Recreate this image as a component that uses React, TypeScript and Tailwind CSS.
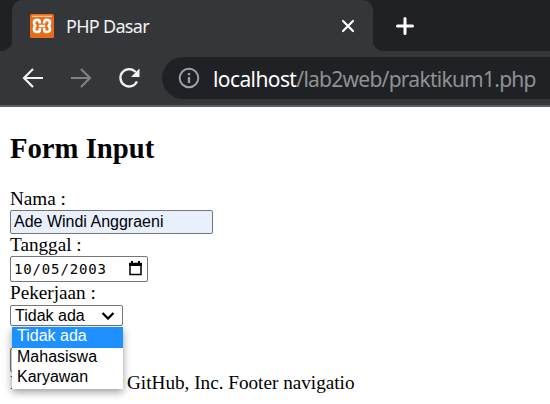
import React from "react";

function BrowserChrome() {
  return (
    <header className="h-[107px] border-b-2 border-[#5f6063] bg-[#35363a] font-['Noto_Sans','Open_Sans',sans-serif]">
      <div className="flex h-[51px] bg-[#35363a]">
        <div className="w-3 shrink-0 rounded-br-[10px] bg-[#202124]" />
        <div className="w-[361px] shrink-0 bg-[#202124]">
          <div className="flex h-full items-center rounded-t-[10px] bg-[#35363a] pl-[18px] pr-[17px]">
            <svg className="h-6 w-6 shrink-0" viewBox="0 0 24 24">
              <rect width="24" height="24" rx="1.5" fill="#e96b17" />
              <path d="M2 1.7h20v1.4H2z" fill="#f9c4a0" />
              <path d="M9.800 9.500V8.200C9.800 6.500 8.800 5.900 7.300 5.900 5 5.900 4 7.300 4 8.800c0 1.400.6 2.200 1.500 3.100C4.600 12.800 4 13.700 4 15c0 1.600 1 3 3.300 3 1.500 0 2.500-.7 2.500-2.300V14M14.200 9.500V8.200c0-1.700 1-2.300 2.500-2.300C19 5.900 20 7.300 20 8.800c0 1.400-.6 2.200-1.500 3.100.9.900 1.500 1.800 1.500 3.100 0 1.600-1 3-3.300 3-1.500 0-2.500-.7-2.500-2.300V14M8.800 12h6.400" fill="none" stroke="#fff" strokeWidth="2.700" strokeLinejoin="round" />
            </svg>
            <span className="ml-3 whitespace-nowrap text-[18px] leading-6 tracking-[-0.7px] text-[#f1f3f4]">PHP Dasar</span>
            <svg className="ml-auto h-4 w-4" viewBox="0 0 16 16" fill="none" stroke="#fff" strokeWidth="2.2" strokeLinecap="round"><path d="m3 3 10 10M13 3 3 13" /></svg>
          </div>
        </div>
        <div className="flex grow items-center rounded-bl-[10px] bg-[#202124] pl-[23px]">
          <svg className="h-[18px] w-[18px]" viewBox="0 0 18 18" fill="none" stroke="#fff" strokeWidth="3" strokeLinecap="round"><path d="M9 1.5v15M1.5 9h15" /></svg>
        </div>
      </div>
      <div className="flex h-[54px] items-center">
        <div className="flex w-[162px] shrink-0 items-center gap-6 pl-[21px]">
          <svg className="h-6 w-6" viewBox="0 0 24 24" fill="none" stroke="#f1f3f4" strokeWidth="2.2"><path d="M22 12H3M12 3l-9 9 9 9" /></svg>
          <svg className="h-6 w-6" viewBox="0 0 24 24" fill="none" stroke="#808185" strokeWidth="2.2"><path d="M2 12h19M12 3l9 9-9 9" /></svg>
          <svg className="h-6 w-6" viewBox="0 0 24 24"><path d="M20 15.500a8.700 8.700 0 1 1-1.300-9.400" fill="none" stroke="#f1f3f4" strokeWidth="2.3" /><path d="M22.500 2.500v8.500H14z" fill="#f1f3f4" /></svg>
        </div>
        <div className="flex h-[42px] grow items-center rounded-l-full bg-[#202124] pl-4">
          <svg className="h-[22px] w-[22px] shrink-0" viewBox="0 0 22 22" fill="none" stroke="#9aa0a6" strokeWidth="2"><circle cx="11" cy="11" r="9.300" /><path d="M11 10v6M11 6v2.200" strokeWidth="2.300" /></svg>
          <span className="ml-[13px] whitespace-nowrap pt-px text-[21px] leading-[30px] text-[#8e9195]"><span className="tracking-[-0.6px] text-white">localhost</span><span className="tracking-[-0.74px]">/lab2web/praktikum1.php</span></span>
        </div>
      </div>
    </header>
  );
}

export default function App() {
  return (
    <div className="h-[404px] w-[550px] overflow-hidden bg-white font-['Liberation_Serif',serif] text-[19.2px] leading-[23px] text-black">
      <BrowserChrome />
      <main className="pl-[10px]">
        <h2 className="pt-[24px] text-[28.7px] font-bold leading-[34px]">Form Input</h2>
        <div className="mt-[22px]">Nama :</div>
        <div className="flex h-[24px] w-[203px] items-center rounded-[2px] border border-[#767676] bg-[#e8f0fe] pb-px pl-[3px] font-['Liberation_Sans',sans-serif] text-[16px]">Ade Windi Anggraeni</div>
        <div className="h-[22px] leading-[21px]">Tanggal :</div>
        <div className="flex h-[26px] w-[138px] items-center justify-between rounded-[2px] border border-[#767676] pl-[3px] pr-[5px] font-['DejaVu_Sans_Mono',monospace] text-[14px]">
          <span className="tracking-[0.85px]">10/05/2003</span>
          <svg className="mb-px h-[15px] w-[13px]" viewBox="0 0 13 15"><path d="M1 2.500h11v11H1z" fill="none" stroke="#000" strokeWidth="1.500" /><path d="M0 2h13v3H0zM2 0h2v3H2zm7 0h2v3H9z" /></svg>
        </div>
        <div className="h-[23px] leading-[21px]">Pekerjaan :</div>
        <div className="relative flex h-[21px] w-[113px] items-center justify-between rounded-[2px] border border-[#767676] pl-1 pr-[7px] font-['Liberation_Sans',sans-serif] text-[16px]">
          <span>Tidak ada</span>
          <svg className="h-2 w-[14px]" viewBox="0 0 14 8" fill="none" stroke="#000" strokeWidth="2.300"><path d="m1.500 1 5.500 5.500L12.500 1" /></svg>
          <ul className="absolute left-[1px] top-[21px] z-10 h-[62px] w-[111px] bg-white text-[16px] leading-[18px] shadow-[0_3px_8px_rgba(0,0,0,0.4)]">
            <li className="h-[21px] bg-[#1e90ff] pl-[5px] text-white">Tidak ada</li>
            <li className="h-5 pl-[5px]">Mahasiswa</li>
            <li className="h-5 pl-[5px]">Karyawan</li>
          </ul>
        </div>
        <div className="mt-[22px] h-[24px] w-[60px] rounded-[2px] border border-[#767676] bg-[#efefef]" />
        <footer className="flex whitespace-nowrap leading-[21px]"><span className="w-[117px]">F</span><span>GitHub, Inc. Footer navigatio</span></footer>
      </main>
    </div>
  );
}
